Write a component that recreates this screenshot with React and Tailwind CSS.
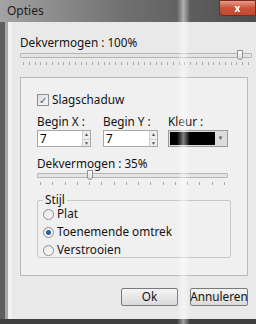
const font = { fontFamily: '"Noto Sans", "Open Sans", sans-serif' };

function Ticks({ count }) {
  return (
    <div className="flex justify-between h-[3px] px-[3px]">
      {Array.from({ length: count }).map((_, i) => (
        <div key={i} className="w-px h-[3px] bg-[#a9a9a9]" />
      ))}
    </div>
  );
}

function Slider({ pos, ticks }) {
  return (
    <div>
      <div className="relative h-[10px] flex items-center">
        <div className="w-full h-[5px] border border-[#b5b5b5] bg-[#e4e4e4] rounded-[1px]" />
        <div
          className="absolute top-0 w-[6px] h-[10px] border border-[#8e8e8e] bg-gradient-to-b from-[#fdfdfd] to-[#dcdcdc] rounded-b-[3px]"
          style={{ left: pos }}
        />
      </div>
      <div className="mt-[2px]">
        <Ticks count={ticks} />
      </div>
    </div>
  );
}

function Spin({ value }) {
  return (
    <div className="flex h-[17px] border border-[#a8a8a8] bg-white">
      <div className="flex-1 pl-[2px] text-[11.75px] leading-[15px] text-black">{value}</div>
      <div className="w-[8px] flex flex-col border-l border-[#cfcfcf] bg-[#eeeeee]">
        <div className="flex-1 flex items-center justify-center text-[5px] text-[#555] border-b border-[#cfcfcf]">▲</div>
        <div className="flex-1 flex items-center justify-center text-[5px] text-[#555]">▼</div>
      </div>
    </div>
  );
}

function Radio({ checked, label }) {
  return (
    <div className="flex items-center gap-[3px] h-[18px]">
      <div className="w-[11px] h-[11px] rounded-full border border-[#8c8c8c] bg-gradient-to-br from-[#e8e8e8] to-[#fafafa] flex items-center justify-center">
        {checked && <div className="w-[5px] h-[5px] rounded-full bg-[#2c5f9a]" />}
      </div>
      <span className="text-[11.75px] text-[#141414]">{label}</span>
    </div>
  );
}

export default function App() {
  return (
    <div className="relative w-[256px] h-[324px] overflow-hidden bg-[#5b5b5b] flex flex-col" style={font}>
      <div className="relative h-[22px] bg-gradient-to-r from-[#a3a3a3] via-[#6f6f6f] to-[#4d4d4d] flex items-center pl-[7px]">
        <span className="text-[12px] text-[#1e1e1e]">Opties</span>
        <div className="absolute right-0 top-0 w-[37px] h-[16px] rounded-bl-[4px] border border-[#7b2a1e] bg-gradient-to-b from-[#e59a85] via-[#c9523a] to-[#c04a30] flex items-center justify-center">
          <span className="text-white text-[10px] font-bold leading-none">x</span>
        </div>
      </div>
      <div className="flex-1 flex">
        <div className="w-[12px] flex">
          <div className="w-[5px] bg-[#5e5e5e]" />
          <div className="w-[3px] bg-[#a9a9a9]" />
          <div className="w-[4px] bg-[#f2f2f2]" />
        </div>
        <div className="flex-1 bg-[#e9e9e9] pl-[8px] pt-[13px]">
          <div className="pr-[8px]">
            <div className="text-[11.75px] leading-[15px] text-[#141414]">Dekvermogen : 100%</div>
            <Slider pos={217} ticks={40} />
          </div>
          <div className="mt-[12px] mr-[12px] h-[199px] border border-[#b9b9b9] bg-[#f0f0f0] pl-[16px] pr-[16px] pt-[14px]">
            <div className="flex items-center gap-[3px] h-[16px]">
              <div className="w-[12px] h-[12px] border border-[#8e8f8f] bg-gradient-to-br from-[#dcdcdc] to-[#f7f7f7] flex items-center justify-center text-[10px] leading-none text-[#3a5f8f]">✓</div>
              <span className="text-[11.75px] text-[#141414]">Slagschaduw</span>
            </div>
            <div className="mt-[5px] flex gap-[12px]">
              <div className="w-[54px]">
                <div className="text-[11.75px] leading-[16px] text-[#141414] mb-[1px]">Begin X :</div>
                <Spin value="7" />
              </div>
              <div className="w-[55px]">
                <div className="text-[11.75px] leading-[16px] text-[#141414] mb-[1px]">Begin Y :</div>
                <Spin value="7" />
              </div>
              <div className="w-[60px] -ml-[2px]">
                <div className="text-[11.75px] leading-[16px] text-[#141414] mb-[1px]">Kleur :</div>
                <div className="flex h-[17px] border border-[#9b9b9b] bg-[#dcdcdc] p-[1px]">
                  <div className="flex-1 bg-black" />
                  <div className="w-[11px] flex items-center justify-center text-[6px] text-[#666]">▼</div>
                </div>
              </div>
            </div>
            <div className="mt-[9px] text-[11.75px] leading-[14px] text-[#141414]">Dekvermogen : 35%</div>
            <div className="w-[191px]">
              <Slider pos={50} ticks={16} />
            </div>
            <div className="relative mt-[15px] w-[194px] h-[58px] border border-[#c8c8c8] rounded-[2px] pl-[5px] pt-[4px]">
              <div className="absolute -top-[9px] left-[5px] px-[2px] bg-[#f0f0f0] text-[11.75px] leading-[15px] text-[#141414]">Stijl</div>
              <Radio label="Plat" />
              <Radio checked label="Toenemende omtrek" />
              <Radio label="Verstrooien" />
            </div>
          </div>
          <div className="mt-[12px] mr-[12px] flex justify-end gap-[12px]">
            <div className="w-[57px] h-[18px] border border-[#7a7a7a] rounded-[2px] bg-gradient-to-b from-[#f4f4f4] to-[#dadada] flex items-center justify-center text-[11.75px] text-[#141414]">Ok</div>
            <div className="w-[58px] h-[18px] border border-[#7a7a7a] rounded-[2px] bg-gradient-to-b from-[#f4f4f4] to-[#dadada] flex items-center justify-center text-[11.75px] text-[#141414]">Annuleren</div>
          </div>
        </div>
      </div>
      <div className="h-[5px] bg-[#3f3f3f]" />
      <div className="absolute top-0 bottom-0 left-[177px] w-[13px] bg-gradient-to-r from-transparent via-white/50 to-transparent pointer-events-none" />
    </div>
  );
}
